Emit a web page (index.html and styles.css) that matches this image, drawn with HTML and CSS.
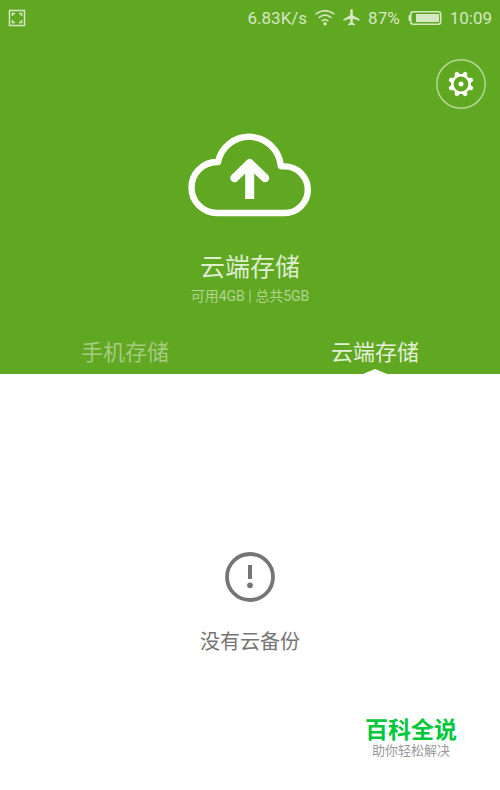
FILE: index.html
```html
<!DOCTYPE html>
<html lang="zh-CN">
<head>
<meta charset="utf-8">
<meta name="viewport" content="width=device-width, initial-scale=1">
<title>云端存储</title>
<link rel="stylesheet" href="styles.css">
</head>
<body>
<header class="hero">
  <div class="status">
    <svg class="status-shot" width="18" height="18" viewBox="0 0 18 18" fill="none" stroke="currentColor" aria-hidden="true">
      <rect x="1.5" y="1.5" width="15" height="15" stroke-width="1.5"/>
      <path d="M4.5 7V4.5H7M11 4.5h2.500V7M13.500 11v2.500H11M7 13.500H4.500V11" stroke-width="1.500"/>
    </svg>
    <span class="speed">6.83K/s</span>
    <svg class="wifi" width="20" height="16" viewBox="0 0 20 16" fill="none" stroke="currentColor" stroke-width="1.600" aria-hidden="true">
      <path d="M.6 4.200Q10-2.800 19.400 4.200M3.600 7.800Q10 2.600 16.400 7.800M6.600 11Q10 8.200 13.400 11"/>
      <circle cx="10" cy="13.700" r="1.700" fill="currentColor" stroke="none"/>
    </svg>
    <svg class="plane" width="17" height="17" viewBox="0 0 17 17" fill="currentColor" aria-hidden="true">
      <path d="M8.500 0C7.600 0 7.200.8 7.200 1.800v4.400L.4 10.200v1.600l6.800-2v4L5 15.300v1.200l3.500-.8 3.500.8v-1.200l-2.200-1.500v-4l6.800 2v-1.600L9.800 6.200V1.800C9.800.8 9.400 0 8.500 0z"/>
    </svg>
    <span class="percent">87%</span>
    <svg class="battery" width="34" height="16" viewBox="0 0 34 16" aria-hidden="true">
      <rect x="2.700" y="1.700" width="30" height="12.600" rx="2.500" fill="none" stroke="currentColor" stroke-width="1.600"/>
      <path d="M2.200 5H1.500Q.5 5 .5 6v4q0 1 1 1h.7z" fill="currentColor"/>
      <rect x="8" y="4" width="23" height="8" fill="currentColor"/>
    </svg>
    <time>10:09</time>
  </div>
  <button class="settings" type="button" aria-label="设置">
    <svg width="50" height="50" viewBox="-25 -25 50 50" fill="none" stroke="currentColor" aria-hidden="true">
      <circle r="24.200" stroke="#b5d797" stroke-width="1.500"/>
      <circle r="8.700" stroke-width="2.600"/>
      <circle r="2.500" fill="currentColor" stroke="none"/>
      <g fill="currentColor" stroke-width="1" stroke-linejoin="round">
        <path id="teeth" d="M-2.200-9L-1.300-12.200H1.300L2.200-9ZM-2.200 9L-1.300 12.200H1.300L2.200 9ZM-9-2.200L-12.200-1.300V1.300L-9 2.200ZM9-2.200L12.200-1.300V1.300L9 2.200Z" transform="rotate(22.500)"/>
        <use href="#teeth" transform="rotate(45)"/>
      </g>
    </svg>
  </button>
  <svg class="cloud" width="124" height="84" viewBox="188 133 124 84" fill="none" stroke="#fff" stroke-linejoin="round" aria-hidden="true">
    <path d="M217 213A25.500 25.500 0 0 1 217 162H218A31.800 31.800 0 0 1 280.800 166Q282 166.500 284.500 166.400A23.300 23.300 0 0 1 284.500 213Z" stroke-width="6.400"/>
    <path d="M234.500 178L249.700 163.200L265 178" stroke-width="8.500" stroke-linecap="round"/>
    <path d="M249.700 163V199" stroke-width="9"/>
  </svg>
  <h1>云端存储</h1>
  <p class="quota">可用4GB | 总共5GB</p>
  <nav class="tabs">
    <a href="#phone">手机存储</a>
    <a class="active" href="#cloud" aria-current="page">云端存储</a>
  </nav>
</header>
<main class="empty" id="cloud">
  <svg width="50" height="50" viewBox="0 0 50 50" fill="none" stroke="currentColor" aria-hidden="true">
    <circle cx="25" cy="25" r="23" stroke-width="3.800"/>
    <path d="M25 13v14" stroke-width="4"/>
    <circle cx="25" cy="33.300" r="2.900" fill="currentColor" stroke="none"/>
  </svg>
  <p>没有云备份</p>
</main>
<footer class="brand">
  <strong>百科全说</strong>
  <span>助你轻松解决</span>
</footer>
</body>
</html>
```
FILE: styles.css
```css
* {
  box-sizing: border-box;
}

body {
  margin: 0;
  min-height: 100vh;
  display: flex;
  flex-direction: column;
  background: #fff;
  font-family: Roboto, "Noto Sans CJK SC", sans-serif;
}

h1,
p {
  margin: 0;
  font-weight: 400;
}

.hero {
  display: flex;
  flex-direction: column;
  align-items: center;
  background: #60a722;
  color: #deedcf;
}

.status {
  align-self: stretch;
  display: flex;
  align-items: center;
  height: 35px;
  padding: 0 8px;
  color: #d5e8c3;
  font-size: 17px;
}

.status-shot {
  margin-right: auto;
}

.wifi {
  margin-left: 8px;
}

.plane {
  margin: 0 8px;
}

.battery {
  margin: 0 8px;
}

.settings {
  align-self: flex-end;
  display: grid;
  place-items: center;
  width: 50px;
  height: 50px;
  margin: 24px 14px 0 0;
  padding: 0;
  border: 0;
  border-radius: 50%;
  background: none;
  color: #fff;
}

.cloud {
  margin-top: 24px;
}

h1 {
  margin-top: 33px;
  font-size: 25px;
  line-height: 36px;
}

.quota {
  color: #b0d48f;
  font-size: 14px;
  line-height: 20px;
}

.tabs {
  align-self: stretch;
  display: grid;
  grid-template-columns: 1fr 1fr;
  margin-top: 26px;
}

.tabs a {
  position: relative;
  height: 42px;
  color: #a5cc80;
  font-size: 22px;
  line-height: 42px;
  text-align: center;
  text-decoration: none;
}

.tabs .active {
  color: #e3f0d6;
}

.tabs .active::after {
  content: "";
  position: absolute;
  bottom: 0;
  left: 50%;
  width: 24px;
  height: 5px;
  margin-left: -12px;
  background: #fff;
  clip-path: polygon(50% 0, 100% 100%, 0 100%);
}

.empty {
  flex: 1;
  display: flex;
  flex-direction: column;
  align-items: center;
  padding-top: 178px;
  color: #757575;
}

.empty p {
  margin-top: 26px;
  font-size: 20px;
  line-height: 28px;
}

.brand {
  align-self: flex-end;
  display: flex;
  flex-direction: column;
  align-items: center;
  padding: 0 43px 29px 0;
}

.brand strong {
  color: #00c73c;
  font-size: 23px;
  font-weight: 700;
  line-height: 20px;
}

.brand span {
  color: #999;
  font-size: 13px;
  line-height: 20px;
}
```
